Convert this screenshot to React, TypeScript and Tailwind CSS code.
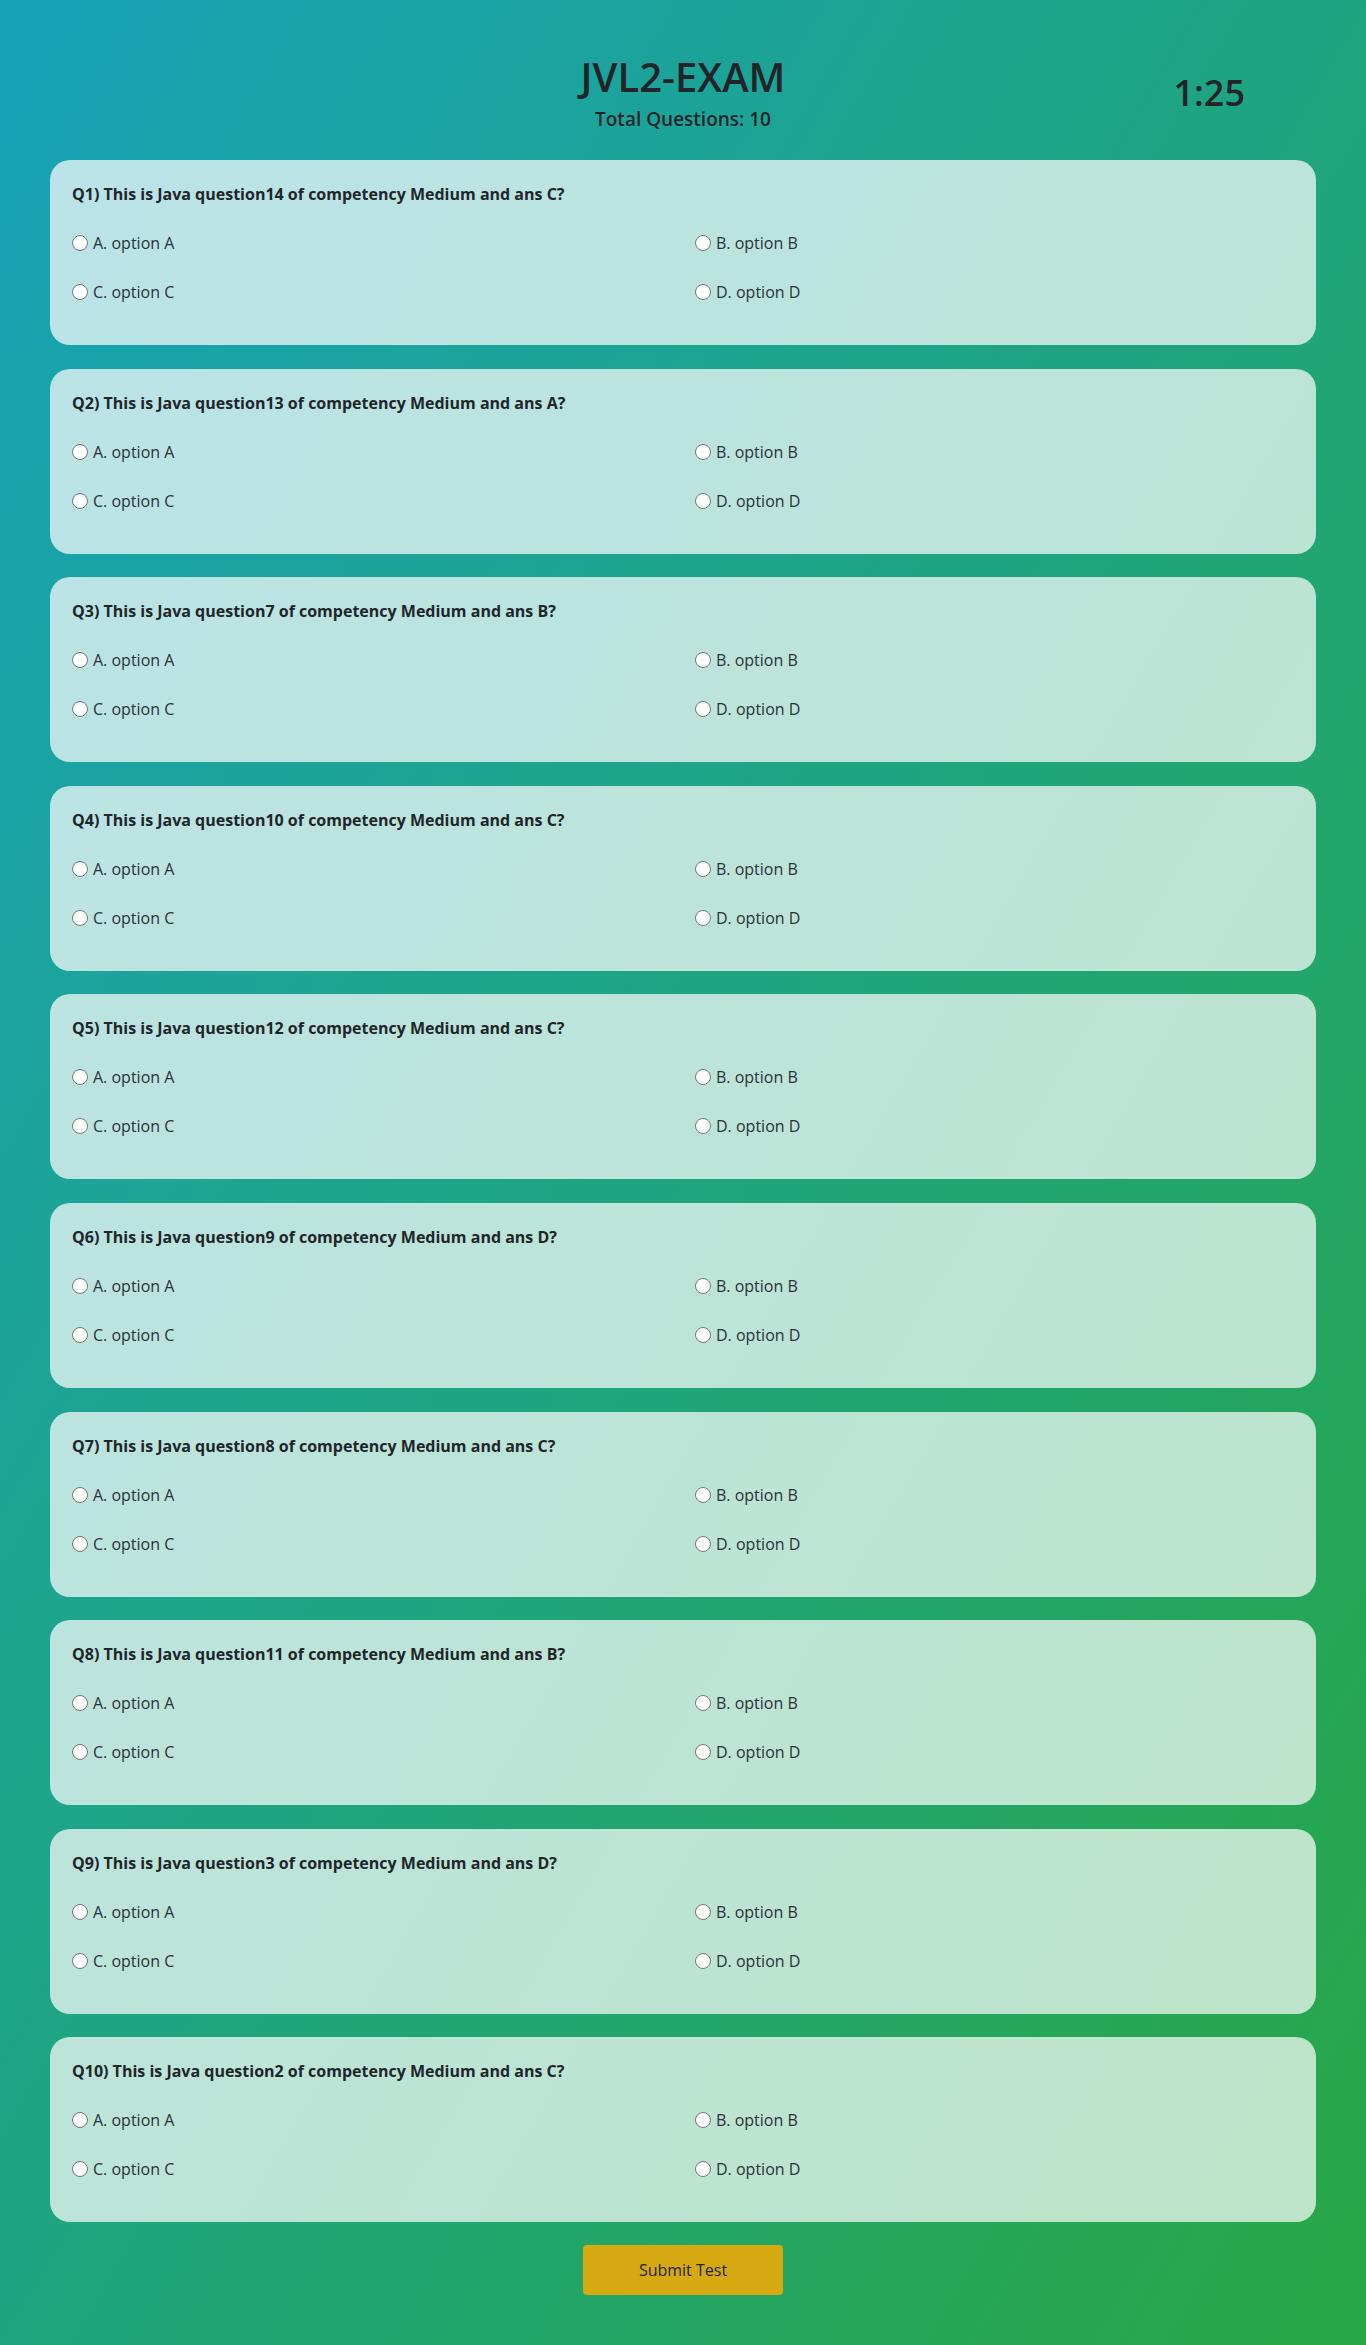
const questions = [
  { no: 1, text: "This is Java question14 of competency Medium and ans C?" },
  { no: 2, text: "This is Java question13 of competency Medium and ans A?" },
  { no: 3, text: "This is Java question7 of competency Medium and ans B?" },
  { no: 4, text: "This is Java question10 of competency Medium and ans C?" },
  { no: 5, text: "This is Java question12 of competency Medium and ans C?" },
  { no: 6, text: "This is Java question9 of competency Medium and ans D?" },
  { no: 7, text: "This is Java question8 of competency Medium and ans C?" },
  { no: 8, text: "This is Java question11 of competency Medium and ans B?" },
  { no: 9, text: "This is Java question3 of competency Medium and ans D?" },
  { no: 10, text: "This is Java question2 of competency Medium and ans C?" },
];

const options = ["A. option A", "B. option B", "C. option C", "D. option D"];

function Option({ label }: { label: string }) {
  return (
    <label className="flex items-center gap-[5px] h-6 text-base text-[#2b3138] cursor-pointer">
      <span className="w-4 h-4 rounded-full border border-[#767676] bg-white shrink-0" />
      {label}
    </label>
  );
}

function QuestionCard({ no, text }: { no: number; text: string }) {
  return (
    <div className="bg-white/70 rounded-[20px] pt-[22px] pb-[41px] px-[22px] h-[185px]">
      <p className="font-bold text-base leading-6 text-[#212529] mb-[25px]">
        Q{no}) {text}
      </p>
      <div className="grid grid-cols-[623px_1fr] gap-y-[25px]">
        {options.map((o) => (
          <Option key={o} label={o} />
        ))}
      </div>
    </div>
  );
}

export default function App() {
  return (
    <div
      className="min-h-[2345px] w-full bg-[linear-gradient(to_bottom_right,#17a2b8,#28a745)] text-[#212529]"
      style={{ fontFamily: '"Open Sans", "Noto Sans", sans-serif' }}
    >
      <header className="relative pt-[53px] h-[160px]">
        <h1 className="text-center text-[40px] leading-[48px] font-semibold">JVL2-EXAM</h1>
        <h5 className="text-center text-[19px] leading-6 font-semibold mt-[6px]">
          Total Questions: {questions.length}
        </h5>
        <div className="absolute right-[121px] top-[71px] text-[36px] leading-[44px] font-semibold">
          1:25
        </div>
      </header>

      <main className="px-[50px] flex flex-col gap-[23.6px]">
        {questions.map((q) => (
          <QuestionCard key={q.no} no={q.no} text={q.text} />
        ))}
      </main>

      <div className="flex justify-center pt-[22.4px] pb-[50px]">
        <button className="w-[200px] h-[50px] rounded-[4px] bg-[#d6a912] text-base text-[#212529]">
          Submit Test
        </button>
      </div>
    </div>
  );
}
